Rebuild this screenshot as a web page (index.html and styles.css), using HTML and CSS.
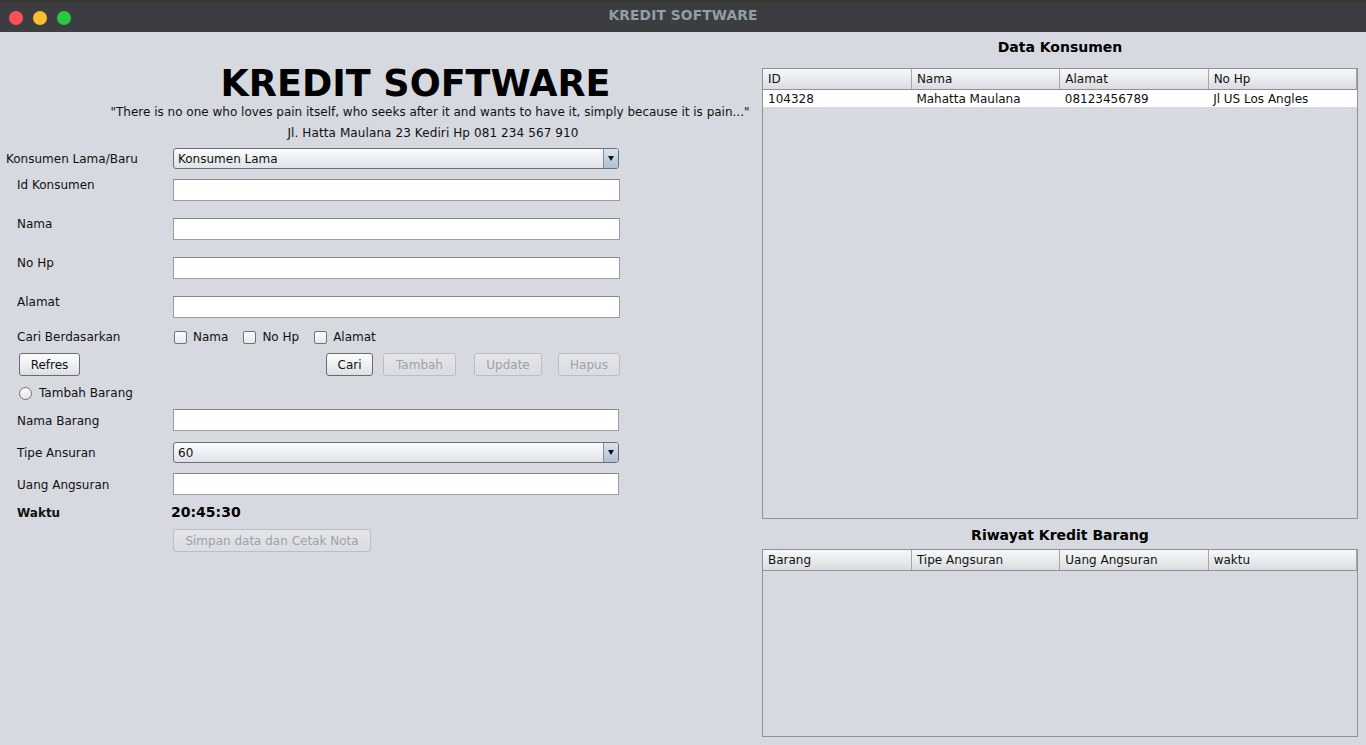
FILE: index.html
```html
<!DOCTYPE html>
<html>
<head>
<meta charset="utf-8">
<title>KREDIT SOFTWARE</title>
<link rel="stylesheet" href="styles.css">
</head>
<body>
<div class="window">
  <div class="titlebar">
    <div class="lights">
      <span class="light red"></span>
      <span class="light yellow"></span>
      <span class="light green"></span>
    </div>
    <div class="wtitle">KREDIT SOFTWARE</div>
  </div>
  <div class="main">
    <section class="left">
      <header class="head">
        <h1 class="apptitle">KREDIT SOFTWARE</h1>
        <p class="quote">"There is no one who loves pain itself, who seeks after it and wants to have it, simply because it is pain..."</p>
        <p class="addr">Jl. Hatta Maulana 23 Kediri Hp 081 234 567 910</p>
      </header>
      <div class="form">
        <div class="row row-a">
          <label class="lbl lbl-first">Konsumen Lama/Baru</label>
          <div class="combo"><span class="combo-text">Konsumen Lama</span><span class="combo-btn"><span class="tri"></span></span></div>
        </div>
        <div class="row row-top row-b">
          <label class="lbl">Id Konsumen</label>
          <div class="field wide"></div>
        </div>
        <div class="row row-top">
          <label class="lbl">Nama</label>
          <div class="field wide"></div>
        </div>
        <div class="row row-top">
          <label class="lbl">No Hp</label>
          <div class="field wide"></div>
        </div>
        <div class="row row-top row-e">
          <label class="lbl">Alamat</label>
          <div class="field wide"></div>
        </div>
        <div class="row row-f">
          <label class="lbl">Cari Berdasarkan</label>
          <div class="checks">
            <span class="check"><span class="box"></span>Nama</span>
            <span class="check"><span class="box"></span>No Hp</span>
            <span class="check"><span class="box"></span>Alamat</span>
          </div>
        </div>
        <div class="row row-g">
          <button class="btn b-refres">Refres</button>
          <button class="btn b-cari">Cari</button>
          <button class="btn dis b-tambah">Tambah</button>
          <button class="btn dis b-update">Update</button>
          <button class="btn dis b-hapus">Hapus</button>
        </div>
        <div class="row row-h">
          <span class="radio"></span><span>Tambah Barang</span>
        </div>
        <div class="row row-i">
          <label class="lbl lbl-low">Nama Barang</label>
          <div class="field"></div>
        </div>
        <div class="row row-j">
          <label class="lbl">Tipe Ansuran</label>
          <div class="combo"><span class="combo-text">60</span><span class="combo-btn"><span class="tri"></span></span></div>
        </div>
        <div class="row row-k">
          <label class="lbl lbl-low">Uang Angsuran</label>
          <div class="field"></div>
        </div>
        <div class="row row-l">
          <label class="lbl lbl-low bold">Waktu</label>
          <span class="clock">20:45:30</span>
        </div>
        <div class="row row-m">
          <button class="btn dis b-simpan">Simpan data dan Cetak Nota</button>
        </div>
      </div>
    </section>
    <section class="right">
      <h2 class="ttl ttl1">Data Konsumen</h2>
      <div class="tbox tbox1">
        <table class="grid">
          <thead>
            <tr><th>ID</th><th>Nama</th><th>Alamat</th><th>No Hp</th></tr>
          </thead>
          <tbody>
            <tr><td>104328</td><td>Mahatta Maulana</td><td>08123456789</td><td>Jl US Los Angles</td></tr>
          </tbody>
        </table>
      </div>
      <h2 class="ttl ttl2">Riwayat Kredit Barang</h2>
      <div class="tbox tbox2">
        <table class="grid">
          <thead>
            <tr><th>Barang</th><th>Tipe Angsuran</th><th>Uang Angsuran</th><th>waktu</th></tr>
          </thead>
        </table>
      </div>
    </section>
  </div>
</div>
</body>
</html>
```

FILE: styles.css
```css
* { box-sizing: border-box; }
html, body { margin: 0; padding: 0; }
body {
  width: 1366px;
  height: 745px;
  overflow: hidden;
  background: #d6d9df;
  font-family: "DejaVu Sans", "Liberation Sans", sans-serif;
  font-size: 12px;
  color: #111;
}
.window { width: 1366px; height: 745px; display: flex; flex-direction: column; }

.titlebar {
  height: 32px;
  background: #3c3d40;
  border-top: 2px solid #37362f;
  display: flex;
  align-items: center;
  position: relative;
}
.lights { display: flex; gap: 10px; margin-left: 9px; margin-top: 2px; }
.light { width: 14px; height: 14px; border-radius: 50%; display: block; }
.red { background: #fc4f57; }
.yellow { background: #fdbd2d; }
.green { background: #2ac840; }
.wtitle {
  position: absolute;
  left: 0; right: 0; top: 5px;
  text-align: center;
  color: #949da6;
  font-weight: bold;
  font-size: 13.8px;
  letter-spacing: 0.1px;
}

.main { display: flex; flex: 1; }
.left { width: 762px; }
.right { width: 596px; display: flex; flex-direction: column; }

.head { padding-left: 98px; text-align: center; padding-top: 33px; }
.apptitle {
  margin: 0;
  font-size: 36.5px;
  line-height: 38px;
  font-weight: bold;
  color: #000;
  padding-right: 29px;
}
.quote, .addr {
  margin: 0;
  font-size: 12px;
  line-height: 18px;
  color: #111;
}
.addr { margin-top: 3px; margin-left: 6px; letter-spacing: 0.1px; }

.form { width: 620px; }
.row { display: flex; align-items: center; }
.lbl { width: 173px; padding-left: 17px; line-height: 16px; flex: none; }
.lbl-first { padding-left: 6px; }
.lbl-low { padding-top: 2px; }
.bold { font-weight: bold; }

.row-a { margin-top: 6px; height: 21px; }
.row-top { height: 39px; align-items: flex-start; }
.row-top .lbl { padding-top: 2px; line-height: 15px; }
.row-b { margin-top: 7px; }
.row-top .field { margin-top: 3px; }
.row-e { height: 36px; }
.row-f { height: 16px; }
.row-g { margin-top: 8px; height: 23px; }
.row-h { margin-top: 9px; height: 16px; padding-left: 19px; }
.row-i { margin-top: 8px; height: 22px; }
.row-j { margin-top: 11px; height: 21px; }
.row-k { margin-top: 10px; height: 22px; }
.row-l { margin-top: 9px; height: 16px; }
.row-m { margin-top: 9px; height: 23px; padding-left: 173px; }

.field {
  width: 446px;
  height: 22px;
  background: #fff;
  border: 1px solid #9a9ca1;
  border-top-color: #86888d;
}
.field.wide { width: 447px; }

.combo {
  width: 446px;
  height: 21px;
  border: 1px solid #6c6f75;
  border-radius: 3px;
  background: linear-gradient(#fbfbfc 0%, #eef0f3 45%, #dfe2e7 100%);
  display: flex;
  align-items: center;
  overflow: hidden;
}
.combo-text { flex: 1; padding-left: 4px; line-height: 16px; }
.combo-btn {
  width: 15px;
  height: 100%;
  border-left: 1px solid #7f8ea1;
  background: linear-gradient(#dbe4ee 0%, #c3d1e0 50%, #aebfd2 100%);
  display: flex;
  align-items: center;
  justify-content: center;
}
.tri {
  width: 0; height: 0;
  border-left: 3.5px solid transparent;
  border-right: 3.5px solid transparent;
  border-top: 5px solid #111;
}

.checks { display: flex; align-items: center; }
.check { display: flex; align-items: center; margin-left: 1px; margin-right: 14px; }
.box {
  width: 13px; height: 13px;
  border: 1px solid #6f7277;
  border-radius: 2px;
  background: linear-gradient(#fdfdfd, #e6e8ec);
  margin-right: 6px;
}
.radio {
  width: 13px; height: 13px;
  border: 1px solid #6f7277;
  border-radius: 50%;
  background: linear-gradient(#fdfdfd, #e3e5e9);
  margin-right: 7px;
}

.btn {
  font-family: inherit;
  font-size: 12px;
  height: 23px;
  padding: 0;
  border: 1px solid #686b70;
  border-radius: 3px;
  background: linear-gradient(#fdfdfd 0%, #eef0f2 50%, #dcdee2 100%);
  color: #111;
  line-height: 20px;
}
.btn.dis {
  border-color: #bcbec3;
  color: #9fa2a6;
  background: linear-gradient(#e3e5e9, #d9dce1);
}
.b-refres { width: 61px; margin-left: 19px; }
.b-cari { width: 47px; margin-left: 246px; }
.b-tambah { width: 73px; margin-left: 10px; }
.b-update { width: 68px; margin-left: 18px; }
.b-hapus { width: 62px; margin-left: 16px; }
.b-simpan { width: 198px; }

.clock { font-weight: bold; font-size: 14px; margin-left: -2px; color: #000; }

.ttl {
  margin: 0;
  text-align: center;
  font-size: 14px;
  line-height: 18px;
  font-weight: bold;
  color: #000;
}
.ttl1 { margin-top: 6px; }
.ttl2 { margin-top: 7px; }
.tbox {
  border: 1px solid #8e9196;
  overflow: hidden;
}
.tbox1 { margin-top: 12px; height: 451px; }
.tbox2 { margin-top: 5px; height: 188px; }
.grid {
  width: 100%;
  border-collapse: collapse;
  table-layout: fixed;
}
.grid th {
  height: 20px;
  padding: 0 0 0 5px;
  text-align: left;
  font-weight: normal;
  background: linear-gradient(#f6f7f9 0%, #e9ebee 50%, #d9dbdf 100%);
  border-right: 1px solid #a4a6ab;
  border-bottom: 1px solid #8f9297;
  color: #111;
  line-height: 16px;
}
.grid td {
  height: 18px;
  padding: 2px 0 0 5px;
  background: #fff;
  line-height: 15px;
  color: #111;
}
```
